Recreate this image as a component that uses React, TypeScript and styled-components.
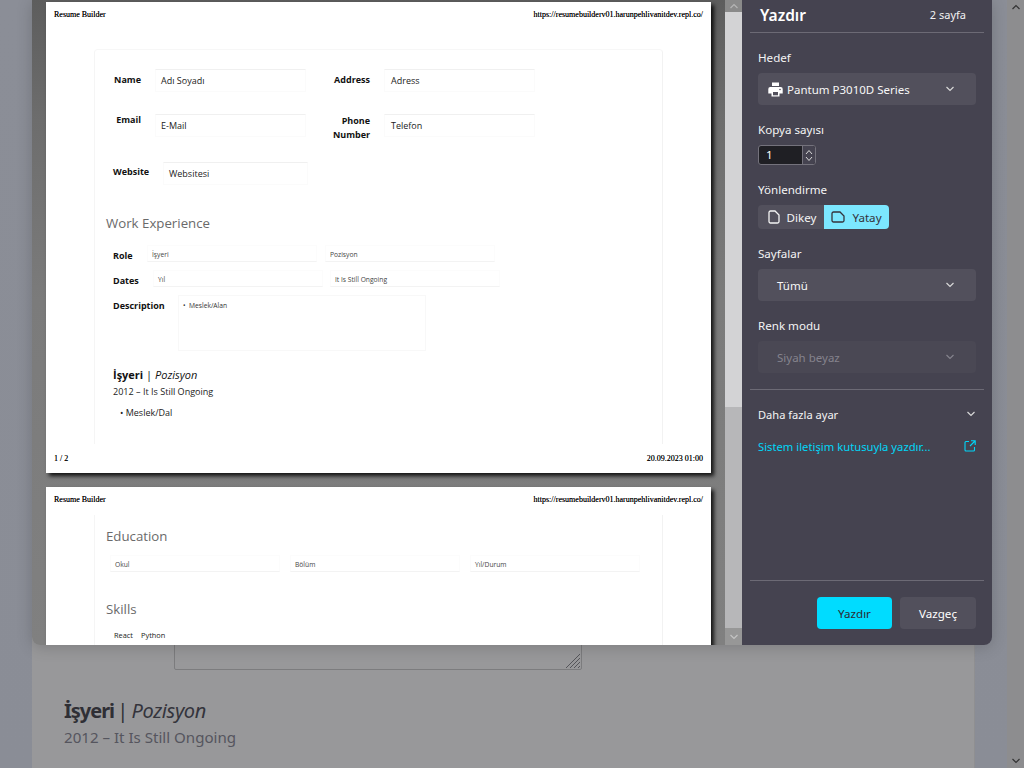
import React from "react";
import styled, { createGlobalStyle } from "styled-components";

const Global = createGlobalStyle`
  html, body { margin: 0; padding: 0; height: 100%; overflow: hidden; background: #97979a; }
  * { box-sizing: border-box; }
`;
const ui = `"Noto Sans", "Open Sans", sans-serif`;
const Screen = styled.div`
  position: relative; width: 1024px; height: 768px; display: flex; overflow: hidden; font-family: ${ui};
`;
const SideStrip = styled.div<{ $w: number }>`
  width: ${(p) => p.$w}px; flex: none;
  background: linear-gradient(180deg, #8b8e97, #8a8d96);
`;
const BackMain = styled.div`
  flex: 1; background: #98989a; padding-left: 32px; display: flex; flex-direction: column;
  border-right: 1px solid #8f8f91; overflow: hidden;
`;
const BackArea = styled.div`
  flex: none; width: 408px; height: 670px; margin-left: 110px; border: 1px solid #7c7c7e; border-radius: 2px;
  position: relative; margin-bottom: 29px;
`;
const Grip = styled.svg`
  position: absolute; right: 0; bottom: 0; width: 16px; height: 16px;
`;
const BackTitle = styled.div`
  font-size: 20px; line-height: 24px; color: #2f2f35; word-spacing: -2px;
  b { font-weight: 700; letter-spacing: -1px; }
  i { font-weight: 400; color: #34343c; letter-spacing: -0.35px; }
`;
const BackSub = styled.div`
  font-size: 15.1px; line-height: 22px; margin-top: 3px; color: #55555e;
`;
const BackItem = styled.div`
  font-size: 15.1px; line-height: 22px; margin: 17px 0 0 21px; color: #44444c;
`;
const PageScroll = styled.div`
  width: 17px; flex: none; background: #8d8d8f; display: flex; flex-direction: column; justify-content: space-between;
  align-items: center; padding: 3px 0;
`;
const Dialog = styled.div`
  position: absolute; left: 32px; top: 0; width: 960px; height: 645px; display: flex; overflow: hidden;
  border-radius: 0 0 8px 8px; box-shadow: 0 2px 16px rgba(0, 0, 0, 0.18);
`;
const Preview = styled.div`
  width: 693px; flex: none; padding: 2px 0 0 14px; display: flex; flex-direction: column; gap: 14px; overflow: hidden;
  background: linear-gradient(180deg, #5d5d5d 0, #6d6d6d 120px, #7b7b7b 300px, #808080 645px);
`;
const PreviewScroll = styled.div`
  width: 17px; flex: none; display: flex; flex-direction: column; background: #b7b7b9;
`;
const ScrollEnd = styled.div`
  height: 12px; flex: none; background: #8a8a8a; display: flex; align-items: center; justify-content: center;
`;
const ScrollEndBottom = styled(ScrollEnd)`
  height: 17px; margin-top: auto; background: #979797;
`;
const Thumb = styled.div`
  height: 395px; flex: none; background: #d3d3d5;
`;
const Sheet = styled.div<{ $h: number }>`
  width: 665px; height: ${(p) => p.$h}px; flex: none; background: #fff; position: relative; display: flex; flex-direction: column;
  box-shadow: 3px 3px 4px rgba(0, 0, 0, 0.85);
`;
const SheetHeader = styled.div`
  height: 24px; flex: none; padding: 1px 8px 0; display: flex; justify-content: space-between; align-items: center;
  font: 8px/10px "Liberation Serif", serif; color: #000; text-shadow: 0 0 0.5px rgba(0, 0, 0, 0.7);
`;
const SheetFooter = styled(SheetHeader)`
  height: 29px; margin-top: auto;
`;
const Card = styled.div<{ $top?: boolean; $h: number }>`
  width: 569px; height: ${(p) => p.$h}px; margin-left: 48px; flex: none; overflow: hidden;
  margin-top: ${(p) => (p.$top ? 23 : 4)}px;
  border-radius: ${(p) => (p.$top ? "4px 4px 0 0" : "0")};
  padding: ${(p) => (p.$top ? "19px 0 0 11px" : "12px 0 0 11px")};
  border-left: 1px solid #f5f5f5; border-right: 1px solid #f2f2f2;
  border-top: ${(p) => (p.$top ? "1px solid #f7f7f7" : "none")};
  font-family: "Open Sans", sans-serif; color: #111;
`;
const Row = styled.div<{ $mb: number }>`
  display: grid; grid-template-columns: 49px 150px 28px 51px 150px; align-items: start; margin-bottom: ${(p) => p.$mb}px;
`;
const Label = styled.div<{ $mt?: number }>`
  font-size: 9px; line-height: 14px; font-weight: 700; text-align: right; margin-top: ${(p) => p.$mt ?? 3}px; color: #111;
  padding-right: 14px;
`;
const Label2 = styled(Label)`
  grid-column: 4;
`;
const corners = `
  background:
    linear-gradient(#ddd,#ddd) 0 0/1px 1px no-repeat, linear-gradient(#ddd,#ddd) 100% 0/1px 1px no-repeat,
    linear-gradient(#ddd,#ddd) 0 100%/1px 1px no-repeat, linear-gradient(#ddd,#ddd) 100% 100%/1px 1px no-repeat, #fff;
  background-origin: border-box;
`;
const Field = styled.div<{ $w?: number; $pl?: number }>`
  ${corners}
  width: ${(p) => p.$w ?? 151}px; height: 23px; border: 1px solid #fbfbfb; border-top-color: #f0f0f0; font-size: 9px; line-height: 22px; padding: 0 0 0 ${(p) => p.$pl ?? 5}px; color: #222;
`;
const WebRow = styled.div`
  display: flex; margin-bottom: 29px; margin-left: 7px;
`;
const WebLabel = styled.div`
  width: 50px; font-size: 9px; font-weight: 700; line-height: 14px; padding-top: 3px; color: #111;
`;
const SecTitle = styled.div`
  font-size: 13.25px; line-height: 18px; color: #6a6a6a; font-weight: 400;
`;
const SmallRow = styled.div<{ $mt?: number; $mb?: number }>`
  display: flex; align-items: flex-start; margin-top: ${(p) => p.$mt ?? 0}px; margin-bottom: ${(p) => p.$mb ?? 7}px; margin-left: 7px;
`;
const SmallLabel = styled.div<{ $w: number }>`
  width: ${(p) => p.$w}px; flex: none; font-size: 9px; font-weight: 700; line-height: 14px; padding-top: 4px; color: #111;
`;
const Small = styled.div<{ $w?: number; $ml?: number }>`
  ${corners}
  width: ${(p) => p.$w ?? 170}px; height: 17px; flex: none; margin-left: ${(p) => p.$ml ?? 0}px; border: 1px solid #fcfcfc; border-bottom-color: #f3f3f3; font-size: 6.7px; line-height: 17px; padding-left: 4px; color: #444;
`;
const Area = styled.div`
  ${corners}
  width: 248px; height: 56px; flex: none; border: 1px solid #f8f8f8; font-size: 6.7px; line-height: 19px; padding-left: 4px; color: #333;
`;
const Job = styled.div`
  margin: 16px 0 0 7px;
  font-size: 11px; line-height: 16px; color: #111;
  b { font-weight: 700; }
`;
const JobSub = styled.div`
  margin-left: 7px; font-size: 9.05px; line-height: 14px; margin-top: 2px; color: #222;
`;
const JobItem = styled.div`
  margin: 7px 0 0 14px; font-size: 9px; line-height: 14px; color: #222;
`;
const EduRow = styled.div`
  display: flex; gap: 10px; margin: 10px 0 28px 4px;
`;
const Skills = styled.div`
  display: flex; gap: 8px; font-size: 7.4px; line-height: 12px; margin: 11px 0 0 8px; color: #222;
`;

const Panel = styled.div`
  width: 250px; flex: none; background: #454350; color: #fff; display: flex; flex-direction: column; padding: 0 8px 16px;
`;
const TitleRow = styled.div`
  height: 33px; flex: none; padding: 0 18px 2px 10px; display: flex; align-items: center; justify-content: space-between; border-bottom: 1px solid #6c6a75;
`;
const Title = styled.div`
  font-size: 15.5px; font-weight: 600; line-height: 30px; color: #fff;
`;
const Count = styled.div`
  font-size: 11px; line-height: 26px; color: #f2f2f2;
`;
const Body = styled.div`
  padding: 0 8px; display: flex; flex-direction: column;
`;
const FieldLabel = styled.div<{ $mt: number }>`
  font-size: 11.6px; line-height: 16px; margin-top: ${(p) => p.$mt}px; color: #f4f4f4;
`;
const Select = styled.div<{ $off?: boolean; $pl: number }>`
  height: 32px; margin-top: 7px; border-radius: 4px; background: ${(p) => (p.$off ? "#4a4854" : "#52505c")};
  color: ${(p) => (p.$off ? "#85838d" : "#f7f7f7")}; display: flex; align-items: center; font-size: 11.5px; padding-left: ${(p) => p.$pl}px; position: relative;
  svg.chev { position: absolute; right: 21px; top: 12px; }
`;
const Spin = styled.div`
  width: 58px; height: 20px; margin-top: 7px; border: 1px solid #74727c; border-radius: 3px; background: #1f1f24; display: flex; font-size: 11.6px; overflow: hidden;
`;
const SpinValue = styled.div`
  flex: 1; padding-left: 7px; line-height: 18px;
`;
const SpinButtons = styled.div`
  width: 13px; background: #454350; border-left: 1px solid #74727c; display: flex; flex-direction: column; align-items: center; justify-content: center; gap: 1px;
`;
const Segments = styled.div`
  display: flex; margin-top: 7px; width: 131px; height: 24px; border-radius: 4px; overflow: hidden;
`;
const Segment = styled.div<{ $on?: boolean }>`
  width: ${(p) => (p.$on ? 65 : 66)}px; flex: none; display: flex; align-items: center; justify-content: center; gap: 7px; font-size: 11.6px;
  padding-left: ${(p) => (p.$on ? 0 : 2)}px;
  background: ${(p) => (p.$on ? "#7ce7ff" : "#52505c")}; color: ${(p) => (p.$on ? "#34333c" : "#f4f4f4")};
`;
const Divider = styled.div<{ $mt: number }>`
  height: 1px; flex: none; background: #6c6a75; margin-top: ${(p) => p.$mt}px;
`;
const MoreRow = styled.div`
  display: flex; align-items: center; justify-content: space-between; padding: 0 8px; margin-top: 16px; height: 16px; font-size: 11.1px; color: #f4f4f4;
`;
const LinkRow = styled(MoreRow)`
  margin-top: 16px; color: #00d6f7; font-size: 11.25px;
`;
const Footer = styled.div`
  margin-top: auto; border-top: 1px solid #6c6a75; padding: 16px 8px 0; display: flex; justify-content: flex-end; gap: 8px;
`;
const Btn = styled.div<{ $primary?: boolean }>`
  width: ${(p) => (p.$primary ? 75 : 76)}px; height: 32px; border-radius: 4px; display: flex; align-items: center; justify-content: center; font-size: 11.6px;
  background: ${(p) => (p.$primary ? "#00dcff" : "#52505c")}; color: ${(p) => (p.$primary ? "#2b2a33" : "#fff")};
`;

const Chev = ({ c = "#d8d8d8", up = false, cls }: { c?: string; up?: boolean; cls?: string }) => (
  <svg className={cls} width="10" height="8" viewBox="0 0 10 8" fill="none">
    <path d={up ? "M1.5 6 L5 2.5 L8.5 6" : "M1.5 2 L5 5.5 L8.5 2"} stroke={c} strokeWidth="1.2" />
  </svg>
);
const MiniChev = ({ up = false }: { up?: boolean }) => (
  <svg width="8" height="6" viewBox="0 0 8 6" fill="none">
    <path d={up ? "M1 5 L4 1.5 L7 5" : "M1 1 L4 4.5 L7 1"} stroke="#d8d8d8" strokeWidth="1" />
  </svg>
);
const Portrait = ({ c }: { c: string }) => (
  <svg width="12" height="14" viewBox="0 0 12 14" fill="none">
    <path d="M1 2.5 a1.5 1.5 0 0 1 1.5-1.5 H7 L11 5 V11.5 a1.5 1.5 0 0 1-1.5 1.5 H2.5 A1.5 1.5 0 0 1 1 11.5 Z" stroke={c} strokeWidth="1.3" />
  </svg>
);
const Landscape = ({ c }: { c: string }) => (
  <svg width="14" height="12" viewBox="0 0 14 12" fill="none">
    <path d="M1 2.5 A1.5 1.5 0 0 1 2.5 1 H9 L13 5 V9.5 A1.5 1.5 0 0 1 11.5 11 H2.5 A1.5 1.5 0 0 1 1 9.5 Z" stroke={c} strokeWidth="1.3" />
  </svg>
);
const Printer = () => (
  <svg width="15" height="15" viewBox="0 0 15 15" style={{ marginRight: 4 }}>
    <path fill="#fff" d="M4 0.5 H11 V4 H4 Z M2.3 5 H12.7 A2 2 0 0 1 14.7 7 V11.5 H11.5 V14.5 H3.5 V11.5 H0.3 V7 A2 2 0 0 1 2.3 5 Z" />
    <path fill="#52505c" d="M5 10 H10 V13.3 H5 Z" />
    <circle cx="12" cy="7.5" r="0.8" fill="#52505c" />
  </svg>
);
const External = () => (
  <svg width="12" height="12" viewBox="0 0 12 12" fill="none" stroke="#00d6f7" strokeWidth="1.1">
    <path d="M5 1.5 H2 A1 1 0 0 0 1 2.5 V10 A1 1 0 0 0 2 11 H9.5 A1 1 0 0 0 10.5 10 V7" />
    <path d="M7 .8 H11.2 V5 M11 1 L6 6" />
  </svg>
);

export default function App() {
  return (
    <Screen>
      <Global />
      <SideStrip $w={32} />
      <BackMain>
        <BackArea>
          <Grip viewBox="0 0 16 16" stroke="#55555a" strokeWidth="1">
            <path d="M1 15 L15 1 M5 15 L15 5 M9 15 L15 9 M13 15 L15 13" />
          </Grip>
        </BackArea>
        <BackTitle><b>İşyeri</b> | <i>Pozisyon</i></BackTitle>
        <BackSub>2012 – It Is Still Ongoing</BackSub>
        <BackItem>Meslek/Dal</BackItem>
      </BackMain>
      <SideStrip $w={32} />
      <PageScroll>
        <Chev c="#333" up />
        <Chev c="#333" />
      </PageScroll>
      <Dialog>
        <Preview>
          <Sheet $h={471}>
            <SheetHeader><span>Resume Builder</span><span>https://resumebuilderv01.harunpehlivanitdev.repl.co/</span></SheetHeader>
            <Card $top $h={395}>
              <Row $mb={22}>
                <Label $mt={4}>Name</Label><Field>Adı Soyadı</Field><span />
                <Label2 $mt={4}>Address</Label2><Field $pl={6}>Adress</Field>
              </Row>
              <Row $mb={20}>
                <Label $mt={-1}>Email</Label><Field>E-Mail</Field><span />
                <Label2 $mt={0}>Phone Number</Label2><Field $pl={6}>Telefon</Field>
              </Row>
              <WebRow>
                <WebLabel>Website</WebLabel><Field $w={145}>Websitesi</Field>
              </WebRow>
              <SecTitle>Work Experience</SecTitle>
              <SmallRow $mt={13}>
                <SmallLabel $w={34}>Role</SmallLabel><Small>İşyeri</Small><Small $ml={8}>Pozisyon</Small>
              </SmallRow>
              <SmallRow>
                <SmallLabel $w={40}>Dates</SmallLabel><Small>Yıl</Small><Small $ml={7}>It Is Still Ongoing</Small>
              </SmallRow>
              <SmallRow $mb={0}>
                <SmallLabel $w={65}>Description</SmallLabel><Area>•&nbsp;&nbsp;Meslek/Alan</Area>
              </SmallRow>
              <Job><b>İşyeri</b> | <i>Pozisyon</i></Job>
              <JobSub>2012 – It Is Still Ongoing</JobSub>
              <JobItem>• Meslek/Dal</JobItem>
            </Card>
            <SheetFooter><span>1 / 2</span><span>20.09.2023 01:00</span></SheetFooter>
          </Sheet>
          <Sheet $h={160}>
            <SheetHeader><span>Resume Builder</span><span>https://resumebuilderv01.harunpehlivanitdev.repl.co/</span></SheetHeader>
            <Card $h={134}>
              <SecTitle>Education</SecTitle>
              <EduRow>
                <Small>Okul</Small><Small>Bölüm</Small><Small>Yıl/Durum</Small>
              </EduRow>
              <SecTitle>Skills</SecTitle>
              <Skills><span>React</span><span>Python</span></Skills>
            </Card>
          </Sheet>
        </Preview>
        <PreviewScroll>
          <ScrollEnd><Chev c="#b5b5b5" up /></ScrollEnd>
          <Thumb />
          <ScrollEndBottom><Chev c="#c4c4c4" /></ScrollEndBottom>
        </PreviewScroll>
        <Panel>
          <TitleRow><Title>Yazdır</Title><Count>2 sayfa</Count></TitleRow>
          <Body>
            <FieldLabel $mt={17}>Hedef</FieldLabel>
            <Select $pl={10}><Printer />Pantum P3010D Series<Chev cls="chev" /></Select>
            <FieldLabel $mt={17}>Kopya sayısı</FieldLabel>
            <Spin>
              <SpinValue>1</SpinValue>
              <SpinButtons><MiniChev up /><MiniChev /></SpinButtons>
            </Spin>
            <FieldLabel $mt={17}>Yönlendirme</FieldLabel>
            <Segments>
              <Segment><Portrait c="#f4f4f4" />Dikey</Segment>
              <Segment $on><Landscape c="#34333c" />Yatay</Segment>
            </Segments>
            <FieldLabel $mt={17}>Sayfalar</FieldLabel>
            <Select $pl={19}>Tümü<Chev cls="chev" /></Select>
            <FieldLabel $mt={17}>Renk modu</FieldLabel>
            <Select $off $pl={19}>Siyah beyaz<Chev cls="chev" c="#85838d" /></Select>
          </Body>
          <Divider $mt={16} />
          <MoreRow>Daha fazla ayar<Chev /></MoreRow>
          <LinkRow>Sistem iletişim kutusuyla yazdır...<External /></LinkRow>
          <Footer>
            <Btn $primary>Yazdır</Btn>
            <Btn>Vazgeç</Btn>
          </Footer>
        </Panel>
      </Dialog>
    </Screen>
  );
}
